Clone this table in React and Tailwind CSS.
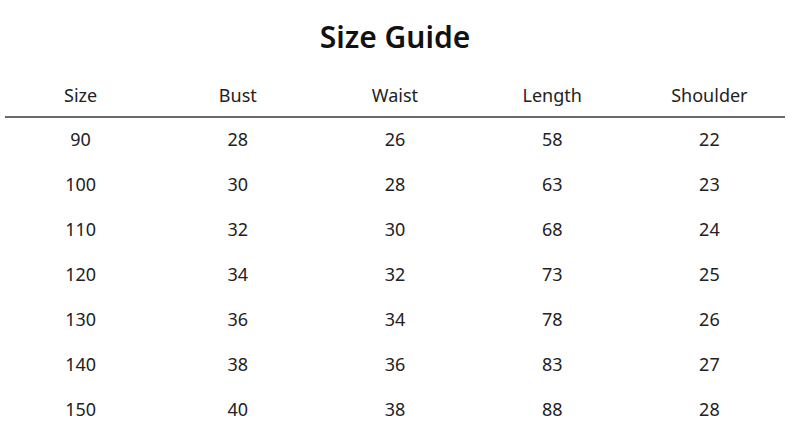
import React from "react";

const headers = ["Size", "Bust", "Waist", "Length", "Shoulder"];

const rows = [
  ["90", "28", "26", "58", "22"],
  ["100", "30", "28", "63", "23"],
  ["110", "32", "30", "68", "24"],
  ["120", "34", "32", "73", "25"],
  ["130", "36", "34", "78", "26"],
  ["140", "38", "36", "83", "27"],
  ["150", "40", "38", "88", "28"],
];

function App() {
  return (
    <div
      className="w-[790px] h-[445px] bg-white text-[#222] overflow-hidden"
      style={{ fontFamily: '"Noto Sans", "Open Sans", sans-serif' }}
    >
      <h1 className="pt-[17px] h-[57px] text-center text-[30px] leading-[40px] font-semibold text-[#111]">
        Size Guide
      </h1>

      <div className="px-[2px]">
        <div className="grid grid-cols-5 h-[59px] items-end pb-[7px]">
          {headers.map((h) => (
            <div key={h} className="text-center text-[18px] leading-[28px]">
              {h}
            </div>
          ))}
        </div>
      </div>

      <div className="mx-[5px] h-[2px] bg-[#6a6a6a]"></div>

      <div className="px-[2px]">
        {rows.map((r) => (
          <div key={r[0]} className="grid grid-cols-5 h-[45px] items-center pb-[3px]">
            {r.map((v, i) => (
              <div key={i} className="text-center text-[18px] leading-[28px]">
                {v}
              </div>
            ))}
          </div>
        ))}
      </div>
    </div>
  );
}

export default App;
